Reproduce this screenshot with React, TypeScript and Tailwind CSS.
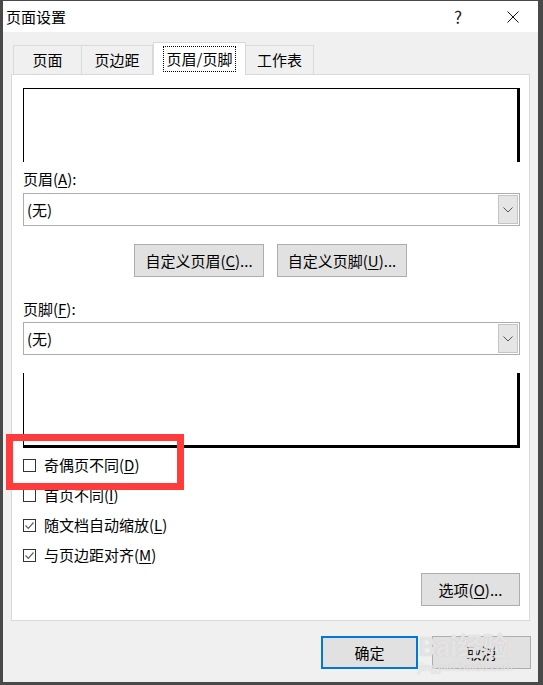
import * as React from "react";

const font = { fontFamily: '"Noto Sans CJK SC", "Noto Sans", sans-serif' };

function Key({ k }: { k: string }) {
  return <u className="underline underline-offset-2 decoration-1">{k}</u>;
}

function Chevron() {
  return (
    <svg width="10" height="6" viewBox="0 0 10 6">
      <polyline points="0.5,0.5 5,5 9.5,0.5" fill="none" stroke="#555" strokeWidth="1" />
    </svg>
  );
}

function SelectBox({ value }: { value: string }) {
  return (
    <div className="flex h-[33px] items-stretch border border-[#adadad] bg-white">
      <div className="flex flex-1 items-center pl-[3px] text-[15px] leading-5 text-black">{value}</div>
      <div className="my-px mr-px flex w-[20px] items-center justify-center border border-[#c4c4c4] bg-[#e5e5e5]">
        <Chevron />
      </div>
    </div>
  );
}

function Btn({ children, w, primary }: { children: React.ReactNode; w: string; primary?: boolean }) {
  return (
    <div
      className={
        "flex h-[33px] items-center justify-center bg-[#e1e1e1] text-[15px] leading-5 text-black " +
        w +
        (primary ? " border-2 border-[#0078d7]" : " border border-[#adadad]")
      }
    >
      {children}
    </div>
  );
}

function Check({ checked, children }: { checked?: boolean; children: React.ReactNode }) {
  return (
    <div className="flex h-[30px] items-center">
      <div className="flex h-[13px] w-[13px] items-center justify-center border border-[#333]">
        {checked && (
          <svg width="11" height="11" viewBox="0 0 11 11">
            <polyline points="1.5,5.5 4.3,8.3 9.5,2.5" fill="none" stroke="#606060" strokeWidth="1.2" />
          </svg>
        )}
      </div>
      <span className="ml-[8px] text-[15px] leading-5 text-black">{children}</span>
    </div>
  );
}

const tabs = [
  { label: "页面", w: "w-[69px]" },
  { label: "页边距", w: "w-[71px]" },
  { label: "页眉/页脚", w: "w-[93px]", active: true },
  { label: "工作表", w: "w-[68px]" },
];

export default function App() {
  return (
    <div className="relative h-[685px] w-[543px] bg-[#494949] pb-[3px] pl-[3px] pr-[5px] pt-px" style={font}>
      <div className="flex h-full flex-col">
        {/* title bar */}
        <div className="flex h-[31px] items-center bg-white pl-[3px] text-black">
          <span className="text-[15px] leading-5">页面设置</span>
          <span className="ml-auto mr-[45px] text-[17px] leading-5 text-[#222]">?</span>
          <svg className="mr-[19px]" width="12" height="12" viewBox="0 0 12 12">
            <path d="M0.5 0.5 L11.5 11.5 M11.5 0.5 L0.5 11.5" stroke="#111" strokeWidth="1" />
          </svg>
        </div>

        {/* body */}
        <div className="flex flex-1 flex-col bg-[#f0f0f0] pl-[8px] pr-[7px] pt-[10px]">
          <div className="relative z-10 -mb-px flex h-[33px] items-end pl-[2px]">
            {tabs.map((t, i) =>
              t.active ? (
                <div
                  key={t.label}
                  className={"flex h-[33px] items-center justify-center border border-b-0 border-[#d9d9d9] bg-white " + t.w}
                >
                  <span className="border border-dotted border-black px-[3px] text-[15px] leading-[24px] text-black">
                    {t.label}
                  </span>
                </div>
              ) : (
                <div
                  key={t.label}
                  className={
                    "flex h-[30px] items-center justify-center border-t border-r border-[#d9d9d9] pb-[1px] text-[15px] leading-5 text-black " +
                    (i === 0 ? "border-l " : "") +
                    t.w
                  }
                >
                  {t.label}
                </div>
              )
            )}
          </div>

          {/* tab panel */}
          <div className="flex w-[519px] flex-col border border-[#d9d9d9] bg-white pb-[14px] pl-[11px] pr-[9px]">
            <div className="mt-[13px] h-[74px] w-[497px] border-l border-r-[3px] border-t border-black" />
            <div className="mt-[7px] text-[15px] leading-5 text-black">
              页眉(<Key k="A" />):
            </div>
            <div className="mt-[4px] w-[497px]">
              <SelectBox value="(无)" />
            </div>
            <div className="mt-[18px] flex w-[497px] justify-center gap-[13px] pr-[2px]">
              <Btn w="w-[130px]">
                自定义页眉(<Key k="C" />)...
              </Btn>
              <Btn w="w-[130px]">
                自定义页脚(<Key k="U" />)...
              </Btn>
            </div>
            <div className="mt-[22px] text-[15px] leading-5 text-black">
              页脚(<Key k="F" />):
            </div>
            <div className="mt-[3px] w-[497px]">
              <SelectBox value="(无)" />
            </div>
            <div className="mt-[18px] h-[75px] w-[497px] border-b-[3px] border-l border-r-[3px] border-black" />
            <div className="mt-[2px] flex flex-col">
              <Check>
                奇偶页不同(<Key k="D" />)
              </Check>
              <Check>
                首页不同(<Key k="I" />)
              </Check>
              <Check checked>
                随文档自动缩放(<Key k="L" />)
              </Check>
              <Check checked>
                与页边距对齐(<Key k="M" />)
              </Check>
            </div>
            <div className="mt-[3px] flex justify-end">
              <Btn w="w-[99px]">
                选项(<Key k="O" />)...
              </Btn>
            </div>
          </div>

          <div className="mt-[15px] flex justify-end gap-[14px]">
            <Btn w="w-[97px]" primary>
              确定
            </Btn>
            <Btn w="w-[99px]">取消</Btn>
          </div>
        </div>
      </div>

      {/* red annotation */}
      <div className="absolute left-[6px] top-[434px] h-[56px] w-[178px] border-[7px] border-[#ff3b3b]" />

      {/* watermark */}
      <div className="pointer-events-none absolute left-[418px] top-[630px] flex flex-col items-start text-white/60">
        <span className="text-[26px] font-bold leading-[30px] tracking-tight [text-shadow:0_0_1px_#bbb]">Bai经验</span>
        <span className="text-[11px] leading-3 [text-shadow:0_0_1px_#bbb]">jingyan.baidu.com</span>
      </div>
    </div>
  );
}
